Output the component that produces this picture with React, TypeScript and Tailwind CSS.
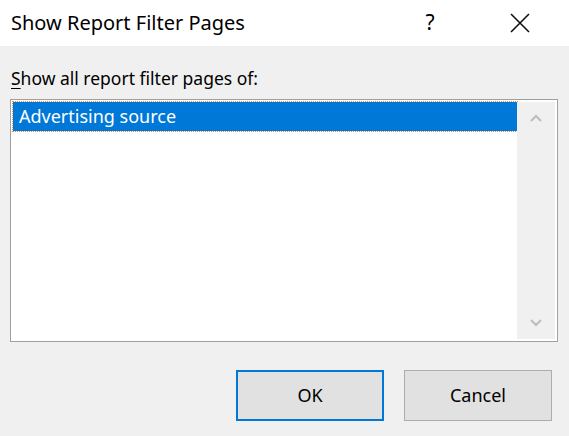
export default function App() {
  const f = { fontFamily: '"Noto Sans", "Open Sans", sans-serif' };
  return (
    <div className="w-[569px] h-[436px] bg-[#f0f0f0] flex flex-col text-black" style={f}>
      <div className="h-[46px] bg-white flex items-center pl-[11px] shrink-0">
        <div className="text-[20px] flex-1">Show Report Filter Pages</div>
        <div className="text-[21px] w-[20px] text-center mr-[70px]">?</div>
        <svg width="20" height="20" viewBox="0 0 20 20" className="mr-[39px]">
          <path d="M1 1L19 19M19 1L1 19" stroke="#111" strokeWidth="1.6" />
        </svg>
      </div>
      <div className="pl-[11px] pt-[20px] text-[17.5px] leading-[24px]">
        <span className="underline underline-offset-[3px]">S</span>how all report filter pages of:
      </div>
      <div className="ml-[10px] mt-[9px] w-[548px] h-[243px] border border-[#a0a0a0] bg-white flex p-[2px]">
        <div className="flex-1">
          <div className="h-[29px] bg-[#0078d7] text-white text-[18px] leading-[29px] pl-[6px] outline-1 outline-dotted outline-[#e08a40]">
            Advertising source
          </div>
        </div>
        <div className="w-[38px] bg-[#f0f0f0] flex flex-col items-center justify-between py-[12px]">
          <svg width="12" height="8" viewBox="0 0 12 8"><path d="M1 7L6 2L11 7" stroke="#bdbdbd" strokeWidth="2" fill="none" /></svg>
          <svg width="12" height="8" viewBox="0 0 12 8"><path d="M1 1L6 6L11 1" stroke="#bdbdbd" strokeWidth="2" fill="none" /></svg>
        </div>
      </div>
      <div className="flex gap-[20px] pl-[236px] mt-[28px]">
        <button className="w-[148px] h-[51px] bg-[#e1e1e1] border-2 border-[#0078d7] text-[18px]">OK</button>
        <button className="w-[148px] h-[51px] bg-[#e1e1e1] border border-[#adadad] text-[18px]">Cancel</button>
      </div>
    </div>
  );
}
